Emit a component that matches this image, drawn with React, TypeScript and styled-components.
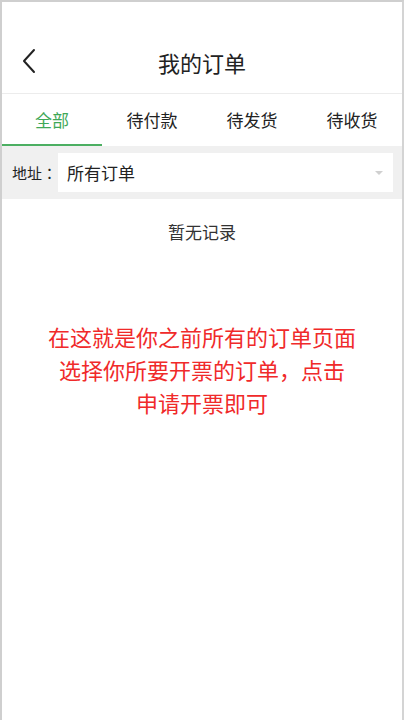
import React from "react";
import styled, { createGlobalStyle } from "styled-components";

const GlobalStyle = createGlobalStyle`
	html, body {
		margin: 0;
		padding: 0;
		background: #ffffff;
	}
	body {
		font-family: "Noto Sans CJK SC", "Noto Sans", sans-serif;
	}
`;

const tabs = ["全部", "待付款", "待发货", "待收货"];

export default function App() {
	const active = 0;

	return (
		<>
			<GlobalStyle />
			<Screen>
				<Header>
					<BackButton aria-label="back">
						<svg width="16" height="26" viewBox="0 0 16 26" fill="none">
							<path d="M13 2 L3 13 L13 24" stroke="#222" strokeWidth="2" strokeLinecap="round" strokeLinejoin="round" />
						</svg>
					</BackButton>
					<Title>我的订单</Title>
				</Header>
				<TabBar>
					{tabs.map((t, i) => (
						<Tab key={t} $active={i === active}>{t}</Tab>
					))}
				</TabBar>
				<FilterBar>
					<FilterLabel>地址：</FilterLabel>
					<SelectBox>
						<SelectText>所有订单</SelectText>
						<Caret />
					</SelectBox>
				</FilterBar>
				<Empty>暂无记录</Empty>
				<Note>
					在这就是你之前所有的订单页面
					<br />
					选择你所要开票的订单，点击
					<br />
					申请开票即可
				</Note>
			</Screen>
		</>
	);
}

const Screen = styled.div`
	display: flex;
	flex-direction: column;
	box-sizing: border-box;
	height: 720px;
	border-top: 2px solid #cfcfcf;
	border-left: 2px solid #cfcfcf;
	border-right: 2px solid #d4d4d4;
	background: #fff;
	overflow: hidden;
`;

const Header = styled.div`
	display: flex;
	align-items: center;
	justify-content: center;
	position: relative;
	height: 62px;
	padding-top: 29px;
	border-bottom: 1px solid #ececec;
`;

const BackButton = styled.div`
	position: absolute;
	left: 19px;
	bottom: 19px;
	display: flex;
`;

const Title = styled.div`
	font-size: 22px;
	color: #222;
`;

const TabBar = styled.div`
	display: grid;
	grid-template-columns: repeat(4, 1fr);
	height: 52px;
`;

const Tab = styled.div<{ $active: boolean }>`
	display: flex;
	align-items: center;
	justify-content: center;
	font-size: 17px;
	color: ${({ $active }) => ($active ? "#3fa858" : "#222")};
	border-bottom: 2px solid ${({ $active }) => ($active ? "#4caf62" : "transparent")};
	box-sizing: border-box;
`;

const FilterBar = styled.div`
	display: flex;
	align-items: center;
	background: #f0f0f0;
	padding: 7px 9px 7px 10px;
`;

const FilterLabel = styled.div`
	font-family: "Noto Sans CJK TC", "Noto Sans CJK SC", sans-serif;
	font-size: 15px;
	color: #222;
	white-space: nowrap;
	margin-right: 1px;
`;

const SelectBox = styled.div`
	flex: 1;
	display: flex;
	align-items: center;
	justify-content: space-between;
	height: 39px;
	background: #fff;
	padding: 0 10px 0 9px;
`;

const SelectText = styled.div`
	font-size: 17px;
	color: #222;
`;

const Caret = styled.div`
	width: 0;
	height: 0;
	border-left: 4px solid transparent;
	border-right: 4px solid transparent;
	border-top: 4px solid #d0d0d0;
`;

const Empty = styled.div`
	text-align: center;
	font-size: 17px;
	color: #333;
	margin-top: 20px;
`;

const Note = styled.div`
	text-align: center;
	font-size: 22px;
	line-height: 33px;
	color: #f02a2a;
	margin-top: 76px;
`;
